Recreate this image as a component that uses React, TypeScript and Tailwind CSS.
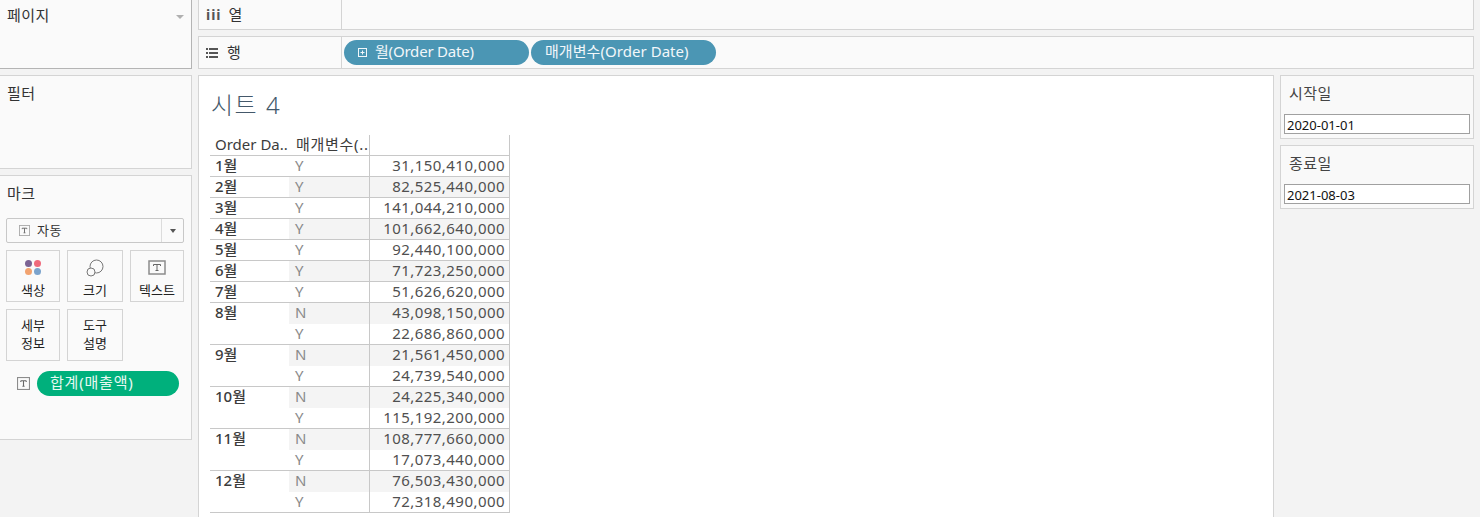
import React from 'react';

const FONT = '"Noto Sans", "Noto Sans CJK KR", sans-serif';

const groups = [
  { month: '1월', rows: [['Y', '31,150,410,000', false]] },
  { month: '2월', rows: [['Y', '82,525,440,000', true]] },
  { month: '3월', rows: [['Y', '141,044,210,000', false]] },
  { month: '4월', rows: [['Y', '101,662,640,000', true]] },
  { month: '5월', rows: [['Y', '92,440,100,000', false]] },
  { month: '6월', rows: [['Y', '71,723,250,000', true]] },
  { month: '7월', rows: [['Y', '51,626,620,000', false]] },
  { month: '8월', rows: [['N', '43,098,150,000', true], ['Y', '22,686,860,000', false]] },
  { month: '9월', rows: [['N', '21,561,450,000', true], ['Y', '24,739,540,000', false]] },
  { month: '10월', rows: [['N', '24,225,340,000', true], ['Y', '115,192,200,000', false]] },
  { month: '11월', rows: [['N', '108,777,660,000', true], ['Y', '17,073,440,000', false]] },
  { month: '12월', rows: [['N', '76,503,430,000', true], ['Y', '72,318,490,000', false]] },
] as { month: string; rows: [string, string, boolean][] }[];

function TextIcon({ size = 12, color = '#8c8c8c' }: { size?: number; color?: string }) {
  return (
    <svg width={size} height={size} viewBox="0 0 12 12" fill="none">
      <rect x="0.5" y="0.5" width="11" height="11" stroke={color} />
      <path d="M3.5 3.5h5M6 3.5v5M5 8.5h2M3.5 3.5v1M8.5 3.5v1" stroke="#666" />
    </svg>
  );
}

function MarkCard({ w, children }: { w: string; children: React.ReactNode }) {
  return (
    <div className={`${w} h-[52px] border border-[#d4d4d4] flex flex-col items-center justify-end text-[13px] leading-[18px] text-[#222] text-center`}>
      {children}
    </div>
  );
}

function Pill({ w, children }: { w: string; children: React.ReactNode }) {
  return (
    <div className={`${w} h-[25px] rounded-full bg-[#4b96b4] text-[#f2f7fa] text-[15px] flex items-center pb-[2px]`}>
      {children}
    </div>
  );
}

function FilterCard({ title, value }: { title: string; value: string }) {
  return (
    <div className="h-[64px] border border-[#d4d4d4] bg-[#f9f9f9] px-[3px] pt-[6px]">
      <div className="pl-[5px] text-[15px] leading-[22px] text-[#444] tracking-[0.4px]">{title}</div>
      <div className="mt-[10px] h-[20px] border border-[#a0a0a0] bg-white px-[2px] pt-[1px] text-[13px] leading-[18px] text-[#111]">{value}</div>
    </div>
  );
}

export default function App() {
  return (
    <div className="w-[1480px] h-[517px] overflow-hidden bg-[#f3f3f3] flex" style={{ fontFamily: FONT }}>
      {/* Left rail */}
      <div className="w-[192px] shrink-0 flex flex-col">
        <div className="h-[69px] bg-[#fafafa] border-r border-b border-[#b4b4b4] pl-[7px] pr-[6px] pt-[3px] flex justify-between text-[15px] text-[#333]">
          <span className="leading-[24px] tracking-[0.4px]">페이지</span>
          <span className="mt-[12px] mr-[1px] w-0 h-0 border-x-[4px] border-x-transparent border-t-[4px] border-t-[#b0b0b0]" />
        </div>
        <div className="mt-[6px] h-[94px] bg-[#fafafa] border-y border-r border-[#d4d4d4] pl-[7px] pt-[5px] text-[15px] leading-[24px] text-[#333] tracking-[0.4px]">
          필터
        </div>
        <div className="mt-[6px] h-[265px] bg-[#fafafa] border-y border-r border-[#d4d4d4] pl-[6px] pt-[5px]">
          <div className="pl-[1px] text-[15px] leading-[24px] text-[#333] tracking-[0.4px]">마크</div>
          <div className="mt-[13px] w-[178px] h-[25px] border border-[#c8c8c8] rounded-[2px] bg-[#fafafa] flex items-center text-[13px] text-[#333]">
            <div className="flex-1 flex items-center gap-[7px] pl-[12px]">
              <TextIcon size={11} color="#aaa" />
              <span className="tracking-[0.5px]">자동</span>
            </div>
            <div className="w-[22px] h-full border-l border-[#dcdcdc] flex items-center justify-center">
              <span className="w-0 h-0 border-x-[3.5px] border-x-transparent border-t-[4px] border-t-[#555]" />
            </div>
          </div>
          <div className="mt-[7px] flex gap-[7px]">
            <MarkCard w="w-[54px]">
              <div className="grid grid-cols-2 gap-[1px] mb-[6px] w-[17px]">
                <span className="size-[7px] rounded-full bg-[#7b6394]" />
                <span className="size-[7px] rounded-full bg-[#ef6a7c]" />
                <span className="size-[7px] rounded-full bg-[#f2a36f]" />
                <span className="size-[7px] rounded-full bg-[#7ba3cc]" />
              </div>
              <span className="mb-[2px]">색상</span>
            </MarkCard>
            <MarkCard w="w-[56px]">
              <svg width="18" height="18" viewBox="0 0 18 18" fill="none" className="mb-[4px]" stroke="#777">
                <circle cx="10.5" cy="7.5" r="6.5" />
                <circle cx="5" cy="13" r="4" fill="#fafafa" />
              </svg>
              <span className="mb-[2px]">크기</span>
            </MarkCard>
            <MarkCard w="w-[54px]">
              <svg width="18" height="15" viewBox="0 0 18 15" fill="none" className="mb-[6px]">
                <rect x="1" y="1" width="16" height="13" stroke="#8c8c8c" strokeWidth="1.5" />
                <path d="M5.5 4.5h7M9 4.5v6M7.5 10.5h3M5.5 4.5v1.5M12.5 4.5v1.5" stroke="#666" />
              </svg>
              <span className="mb-[2px]">텍스트</span>
            </MarkCard>
          </div>
          <div className="mt-[7px] flex gap-[7px]">
            <MarkCard w="w-[54px]"><span className="mb-[8px]">세부<br />정보</span></MarkCard>
            <MarkCard w="w-[56px]"><span className="mb-[8px]">도구<br />설명</span></MarkCard>
          </div>
          <div className="mt-[10px] flex items-center gap-[7px] pl-[11px]">
            <TextIcon size={13} />
            <div className="w-[142px] h-[25px] rounded-full bg-[#00b07c] text-[#e6f8f2] text-[15px] tracking-[0.8px] leading-[22px] pl-[13px]">합계(매출액)</div>
          </div>
        </div>
      </div>

      {/* Center + right */}
      <div className="flex-1 pl-[6px] pr-[6px] flex flex-col">
        <div className="h-[30px] bg-[#fafafa] border-l border-r border-b border-[#d4d4d4] flex text-[15px] text-[#333]">
          <div className="w-[143px] border-r border-[#d4d4d4] flex items-center pl-[7px] gap-[7px] pb-[1px]">
            <span className="text-[#555] font-bold text-[14px] tracking-[1px]">iii</span>
            <span>열</span>
          </div>
        </div>
        <div className="mt-[6px] h-[33px] bg-[#fafafa] border border-[#d4d4d4] flex text-[15px] text-[#333]">
          <div className="w-[143px] shrink-0 border-r border-[#d4d4d4] flex items-center pl-[7px] gap-[9px]">
            <svg width="12" height="10" viewBox="0 0 12 10" fill="#555">
              <path d="M0 0h2v2H0zM3 0h9v2H3zM0 4h2v2H0zM3 4h9v2H3zM0 8h2v2H0zM3 8h9v2H3z" />
            </svg>
            <span>행</span>
          </div>
          <div className="pl-[2px] flex items-center gap-[2px]">
            <Pill w="w-[185px]">
              <svg width="11" height="11" viewBox="0 0 11 11" fill="none" stroke="#f2f7fa" className="ml-[13px] mr-[7px] mt-[2px]">
                <rect x="1.5" y="1.5" width="8" height="8" />
                <path d="M3.5 5.5h4M5.5 3.5v4" />
              </svg>
              <span className="tracking-[-0.2px]">월(Order Date)</span>
            </Pill>
            <Pill w="w-[185px]">
              <span className="pl-[14px] tracking-[0.05px]">매개변수(Order Date)</span>
            </Pill>
          </div>
        </div>

        <div className="mt-[6px] flex-1 flex gap-[6px] min-h-0">
          {/* Sheet */}
          <div className="w-[1076px] shrink-0 bg-white border-l border-r border-t border-[#d4d4d4] pl-[11px] pt-[11px]">
            <div className="pl-[1px] text-[24px] leading-[36px] text-[#44586a] tracking-[1.5px] font-light">시트 4</div>
            <div className="mt-[12px] w-[300px]">
              <div className="h-[21px] flex border-b border-[#c8c8c8] text-[15px] leading-[19px] text-[#3c3c3c]">
                <div className="w-[80px] pl-[5px] whitespace-nowrap overflow-hidden">Order Da..</div>
                <div className="w-[80px] pl-[6px] border-r border-[#c8c8c8] whitespace-nowrap overflow-hidden tracking-[0.7px]">매개변수(..</div>
                <div className="w-[140px] border-r border-[#c8c8c8]" />
              </div>
              {groups.map(g => (
                <div key={g.month} className="flex border-b border-[#c8c8c8]">
                  <div className="w-[79px] pl-[5px] text-[15px] leading-[18px] font-medium text-[#3c3c3c]">{g.month}</div>
                  <div className="flex-1">
                    {g.rows.map(([flag, value, shaded], i) => (
                      <div
                        key={flag}
                        className={`flex ${i === g.rows.length - 1 ? 'h-[20px]' : 'h-[21px]'} ${shaded ? 'bg-[#f4f4f4]' : ''} text-[15px] leading-[18px]`}
                      >
                        <div className="w-[81px] pl-[6px] border-r border-[#c8c8c8] text-[#8a8a8a]">{flag}</div>
                        <div className="w-[140px] pr-[4px] border-r border-[#c8c8c8] text-right text-[#505050] tracking-[0.45px] whitespace-nowrap">{value}</div>
                      </div>
                    ))}
                  </div>
                </div>
              ))}
            </div>
          </div>
          {/* Date filters */}
          <div className="flex-1 flex flex-col gap-[6px]">
            <FilterCard title="시작일" value="2020-01-01" />
            <FilterCard title="종료일" value="2021-08-03" />
          </div>
        </div>
      </div>
    </div>
  );
}
